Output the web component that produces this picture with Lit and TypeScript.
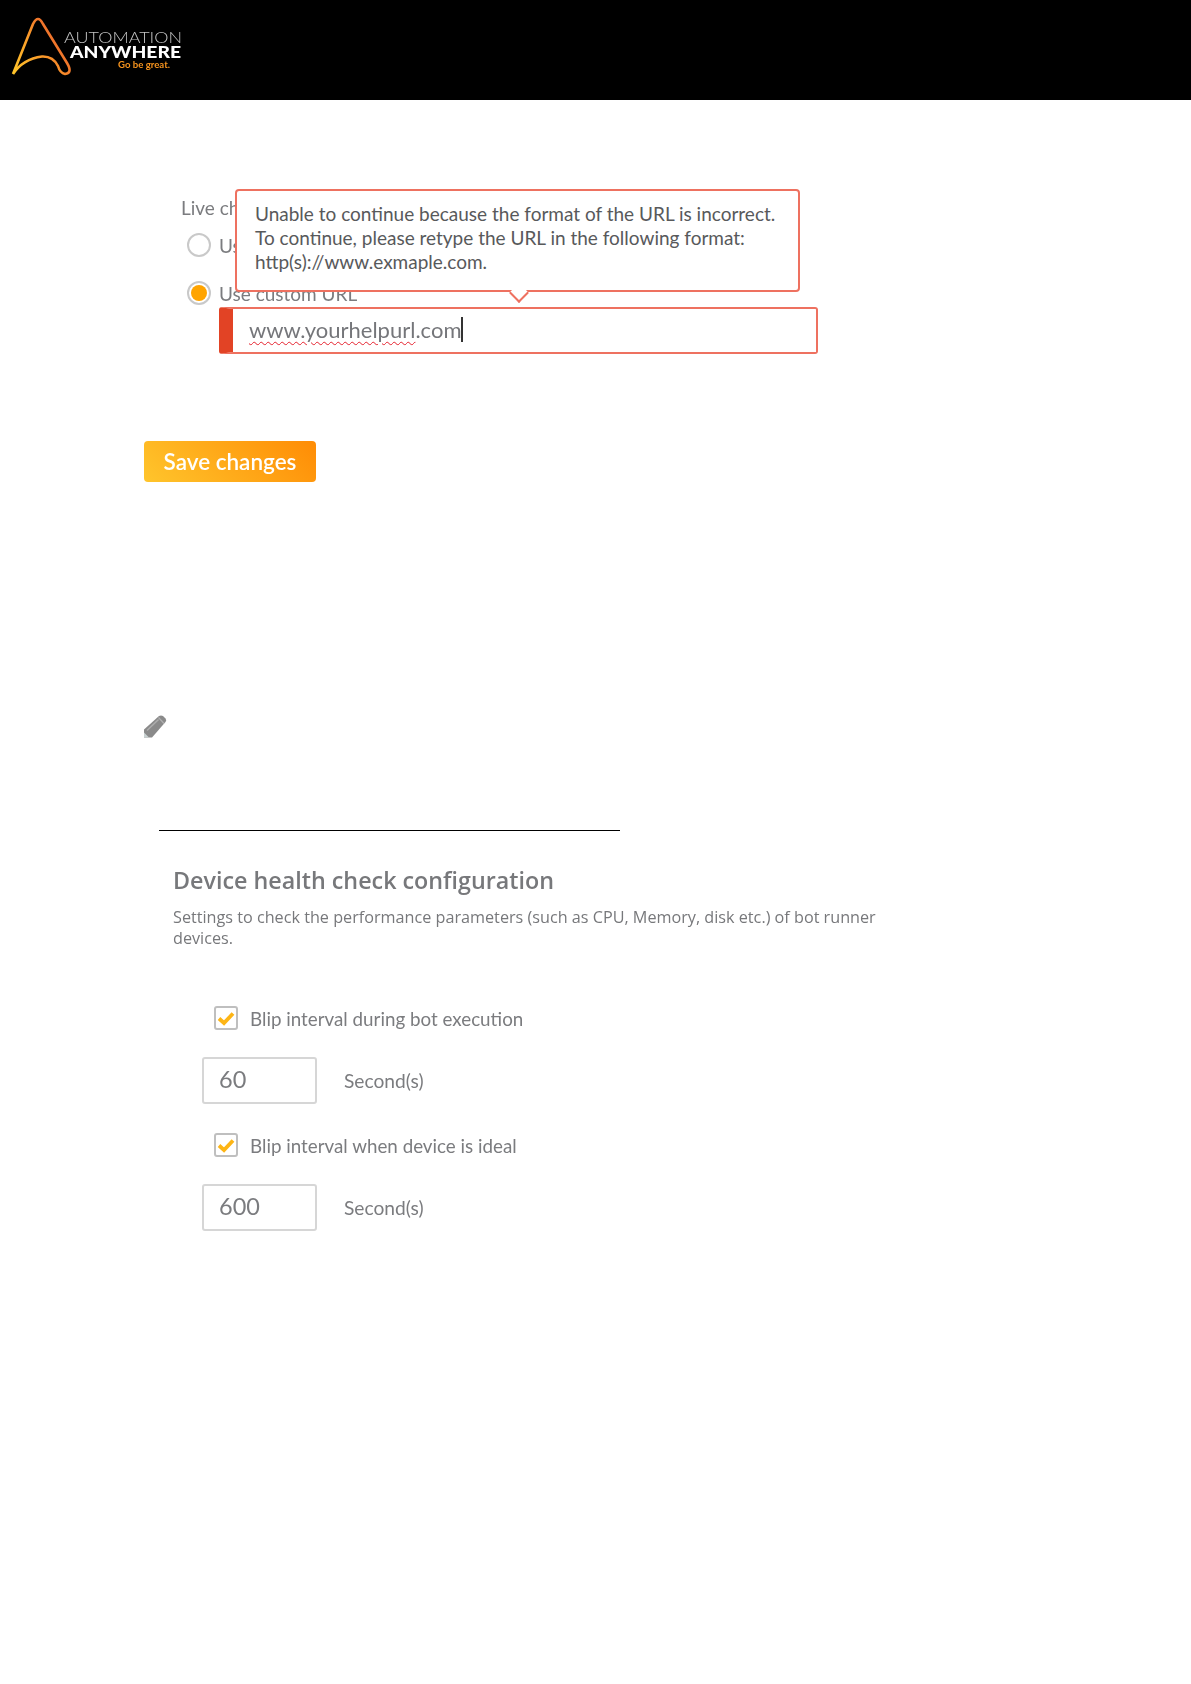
import { LitElement, html, css, svg } from "lit";
import { customElement } from "lit/decorators.js";

const logo = svg`
  <svg class="logo" width="200" height="100" viewBox="0 0 200 100">
    <defs>
      <linearGradient id="aa" x1="0" y1="1" x2="1" y2="0.35">
        <stop offset="0" stop-color="#ffc629"/>
        <stop offset="0.55" stop-color="#f9962a"/>
        <stop offset="1" stop-color="#e8562c"/>
      </linearGradient>
    </defs>
    <path d="M13 74 L33 24 Q38 14 43 24 L67 63 Q73 73 65 74 Q60 73 58 66 Q53 56 42 56.5 Q23 59 13 74" fill="none" stroke="url(#aa)" stroke-width="2.6" stroke-linejoin="round"/>
    <text x="64" y="43" class="l1" textLength="118" lengthAdjust="spacingAndGlyphs">AUTOMATION</text>
    <text x="70" y="58" class="l2" textLength="111" lengthAdjust="spacingAndGlyphs">ANYWHERE</text>
    <text x="118" y="68" class="l3" textLength="52" lengthAdjust="spacingAndGlyphs">Go be great.</text>
  </svg>`;

const pencil = svg`
  <svg width="23" height="23" viewBox="0 0 23 23">
    <path d="M0 22.5 V14.5 L15 1 Q17 0 19 1 L21.5 3.5 Q23 5 21.5 7 L8 22.5 Z" fill="#8a8a8a"/>
    <path d="M0 22.5 V17.5 L5 22.5 Z" fill="#c9d2d2"/>
    <path d="M3 15.5 L14.5 4.5" stroke="#adadad" stroke-width="1.5"/>
    <path d="M14.5 2.5 L20 8.5" stroke="#b0b0b0" stroke-width="1.2"/>
  </svg>`;

const check = svg`
  <svg width="18" height="15" viewBox="0 0 18 15">
    <path d="M2 7.5 L7 12 L16 2.5" fill="none" stroke="#fdb515" stroke-width="3.8"/>
  </svg>`;

@customElement("app-root")
export class AppRoot extends LitElement {
  static styles = css`
    :host {
      display: block;
      min-height: 1684px;
      background: #fff;
      font-family: "Lato", "Open Sans", sans-serif;
      color: #7b7c7f;
    }
    header {
      height: 100px;
      background: #000;
      filter: blur(0.4px);
    }
    .logo { display: block; }
    .logo text { font-family: "Lato", sans-serif; }
    .l1 { fill: #c4c4c4; font-size: 15px; font-weight: 300; }
    .l2 { fill: #fff; font-size: 16px; font-weight: 900; }
    .l3 { fill: #f7941e; font-size: 8.5px; font-weight: 700; }
    main {
      padding: 96px 0 0 144px;
      filter: blur(0.4px);
    }
    .live {
      position: relative;
      margin-left: 37px;
      width: 636px;
    }
    .live-label {
      font-size: 19px;
      line-height: 23px;
    }
    .radio-row {
      display: flex;
      align-items: center;
      gap: 8px;
      margin-left: 6px;
      height: 24px;
      font-size: 19px;
    }
    .radio-row.first { margin-top: 14px; }
    .radio-row.second { margin-top: 24px; }
    .radio {
      box-sizing: border-box;
      width: 24px;
      height: 24px;
      border: 2px solid #c9c9c9;
      border-radius: 50%;
      display: flex;
      align-items: center;
      justify-content: center;
    }
    .radio i {
      width: 16px;
      height: 16px;
      border-radius: 50%;
      background: #ffa400;
    }
    .url {
      box-sizing: border-box;
      display: flex;
      align-items: center;
      width: 599px;
      height: 47px;
      margin: 2px 0 0 38px;
      border: 2px solid #ee7160;
      border-left: 14px solid #e24325;
      border-radius: 3px;
      padding: 0 0 3px 16px;
      font-size: 22px;
      color: #75767a;
    }
    .url span {
      text-decoration: underline wavy #e5212d 1px;
      text-underline-offset: 3px;
    }
    .caret {
      display: inline-block;
      width: 1.5px;
      height: 25px;
      background: #333;
    }
    .tip {
      position: absolute;
      left: 54px;
      top: -7px;
      box-sizing: border-box;
      width: 565px;
      height: 103px;
      padding: 11px 18px;
      background: #fff;
      border: 2px solid #ee7160;
      border-radius: 4px;
      font-size: 19px;
      line-height: 24px;
      color: #58595b;
    }
    .tip::after {
      content: "";
      position: absolute;
      left: 275px;
      bottom: -10px;
      width: 14px;
      height: 14px;
      box-sizing: border-box;
      background: #fff;
      border-right: 2px solid #ee7160;
      border-bottom: 2px solid #ee7160;
      transform: rotate(45deg);
    }
    button {
      display: block;
      width: 172px;
      height: 41px;
      margin-top: 87px;
      padding: 0;
      border: 0;
      border-radius: 4px;
      background: linear-gradient(45deg, #ffc52c, #ff8c05);
      color: #fff;
      font: 600 22.5px "Lato", sans-serif;
    }
    .pencil {
      display: block;
      margin-top: 233px;
      height: 24px;
    }
    .pencil svg { display: block; }
    hr {
      width: 461px;
      height: 1px;
      margin: 91px 0 0 15px;
      border: 0;
      background: #000;
    }
    .device {
      margin: 34px 0 0 29px;
    }
    h2 {
      margin: 0;
      font-family: "Open Sans", sans-serif;
      font-size: 23.3px;
      line-height: 30px;
      font-weight: 600;
      color: #77787b;
    }
    .device p {
      width: 720px;
      margin: 12px 0 0;
      font-family: "Open Sans", sans-serif;
      font-size: 16.2px;
      line-height: 21px;
      color: #77787b;
    }
    .opts {
      margin: 57px 0 0 29px;
      display: grid;
      row-gap: 27px;
    }
    .check-row {
      display: flex;
      align-items: center;
      gap: 12px;
      margin-left: 12px;
      height: 24px;
      font-size: 18.8px;
    }
    .check-row.next { margin-top: 2px; }
    .box {
      box-sizing: border-box;
      width: 24px;
      height: 24px;
      border: 2px solid #bfbfbf;
      border-radius: 3px;
      display: flex;
      align-items: center;
      justify-content: center;
    }
    .value-row {
      display: flex;
      align-items: center;
      gap: 27px;
      font-size: 19.2px;
    }
    .value {
      box-sizing: border-box;
      width: 115px;
      height: 47px;
      padding: 0 0 4px 15px;
      display: flex;
      align-items: center;
      border: 2px solid #d6d6d6;
      border-radius: 3px;
      font-size: 23.5px;
    }
  `;

  render() {
    return html`
      <header>${logo}</header>
      <main>
        <section class="live">
          <div class="live-label">Live chat</div>
          <div class="radio-row first"><span class="radio"></span>Use default URL</div>
          <div class="radio-row second"><span class="radio"><i></i></span>Use custom URL</div>
          <div class="url"><span>www.yourhelpurl</span>.com<b class="caret"></b></div>
          <div class="tip">
            Unable to continue because the format of the URL is incorrect.<br />
            To continue, please retype the URL in the following format:<br />
            http(s)://www.exmaple.com.
          </div>
        </section>
        <button>Save changes</button>
        <div class="pencil">${pencil}</div>
        <hr />
        <section class="device">
          <h2>Device health check configuration</h2>
          <p>Settings to check the performance parameters (such as CPU, Memory, disk etc.) of bot runner devices.</p>
          <div class="opts">
            <div class="check-row"><span class="box">${check}</span>Blip interval during bot execution</div>
            <div class="value-row"><span class="value">60</span>Second(s)</div>
            <div class="check-row next"><span class="box">${check}</span>Blip interval when device is ideal</div>
            <div class="value-row"><span class="value">600</span>Second(s)</div>
          </div>
        </section>
      </main>
    `;
  }
}
